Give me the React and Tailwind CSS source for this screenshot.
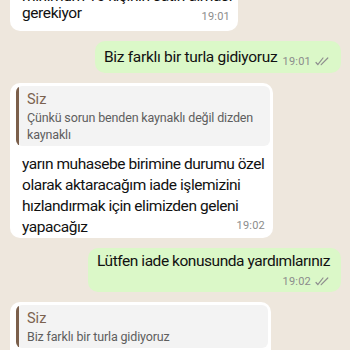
import React from 'react'

function Checks() {
  return (
    <svg width="14" height="9" viewBox="0 0 14 9" fill="none" stroke="#8f8f8f" strokeWidth="1.2" strokeLinecap="round" strokeLinejoin="round" className="inline-block ml-[4px] -mt-[1px]">
      <path d="M1 5.5l1.8 2.2L8 1" />
      <path d="M6.2 7.7L12.8 1" />
    </svg>
  )
}

function Time({ t, read, className = '' }) {
  return (
    <span className={`float-right text-[11px] leading-[14px] tracking-[0.2px] text-[#8c8c8c] ${className}`}>
      {t}
      {read && <Checks />}
    </span>
  )
}

function Quote({ children }) {
  return (
    <div className="flex rounded-[6px] overflow-hidden bg-[#f3f3f3]">
      <div className="w-[3px] bg-[#7b5f4b]" />
      <div className="pl-[8px] pr-[8px] pt-[5px] pb-[3px] whitespace-nowrap">
        <div className="text-[14.5px] leading-[18px] text-[#7b624f]">Siz</div>
        <div className="text-[12.5px] leading-[17px] tracking-[-0.15px] text-[#5e5e5e]">{children}</div>
      </div>
    </div>
  )
}

export default function App() {
  return (
    <div className="w-[350px] h-[350px] overflow-hidden bg-[#eee7dd] font-['Roboto',sans-serif] text-[#111111]">
      <div className="-mt-[13px] flex flex-col gap-[10px] pl-[10px] pr-[9px]">
        {/* incoming, cut at top */}
        <div className="self-start w-[228px] rounded-[10px] bg-white pl-[12px] pr-[8px] pt-[1px] pb-[7px] text-[15.5px] leading-[17px] tracking-[-0.4px] whitespace-nowrap">
          <p>
            minimum 10 kişinin satın alması
            <br />
            gerekiyor
            <Time t="19:01" className="mt-[5px]" />
          </p>
        </div>

        {/* outgoing */}
        <div className="self-end w-[246px] rounded-[10px] bg-[#dbf8c8] pl-[9px] pr-[12px] pt-[6px] pb-[4px] text-[15.5px] leading-[21px] tracking-[-0.3px] whitespace-nowrap">
          <p>
            Biz farklı bir turla gidiyoruz
            <Time t="19:01" read className="mt-[8px]" />
          </p>
        </div>

        {/* incoming with reply */}
        <div className="self-start w-[263px] rounded-[10px] bg-white p-[3px] pl-[6px] pb-0">
          <Quote>
            Çünkü sorun benden kaynaklı değil dizden
            <br />
            kaynaklı
          </Quote>
          <p className="pl-[6px] pr-[5px] pt-[8px] text-[15.5px] leading-[21px] tracking-[-0.45px] whitespace-nowrap">
            yarın muhasebe birimine durumu özel
            <br />
            olarak aktaracağım iade işlemizini
            <br />
            hızlandırmak için elimizden geleni
            <br />
            yapacağız
            <Time t="19:02" className="mt-[2px]" />
          </p>
        </div>

        {/* outgoing */}
        <div className="self-end w-[253px] rounded-[10px] bg-[#dbf8c8] pl-[9px] pr-[12px] pt-[3px] pb-[3px] text-[15.5px] leading-[21px] tracking-[-0.45px] whitespace-nowrap">
          <p>
            Lütfen iade konusunda yardımlarınız
            <br />
            <Time t="19:02" read className="mt-[3px]" />
          </p>
        </div>

        {/* incoming with reply */}
        <div className="self-start w-[261px] rounded-[10px] bg-white p-[3px] pl-[6px] pb-[20px]">
          <Quote>Biz farklı bir turla gidiyoruz</Quote>
        </div>
      </div>
    </div>
  )
}
